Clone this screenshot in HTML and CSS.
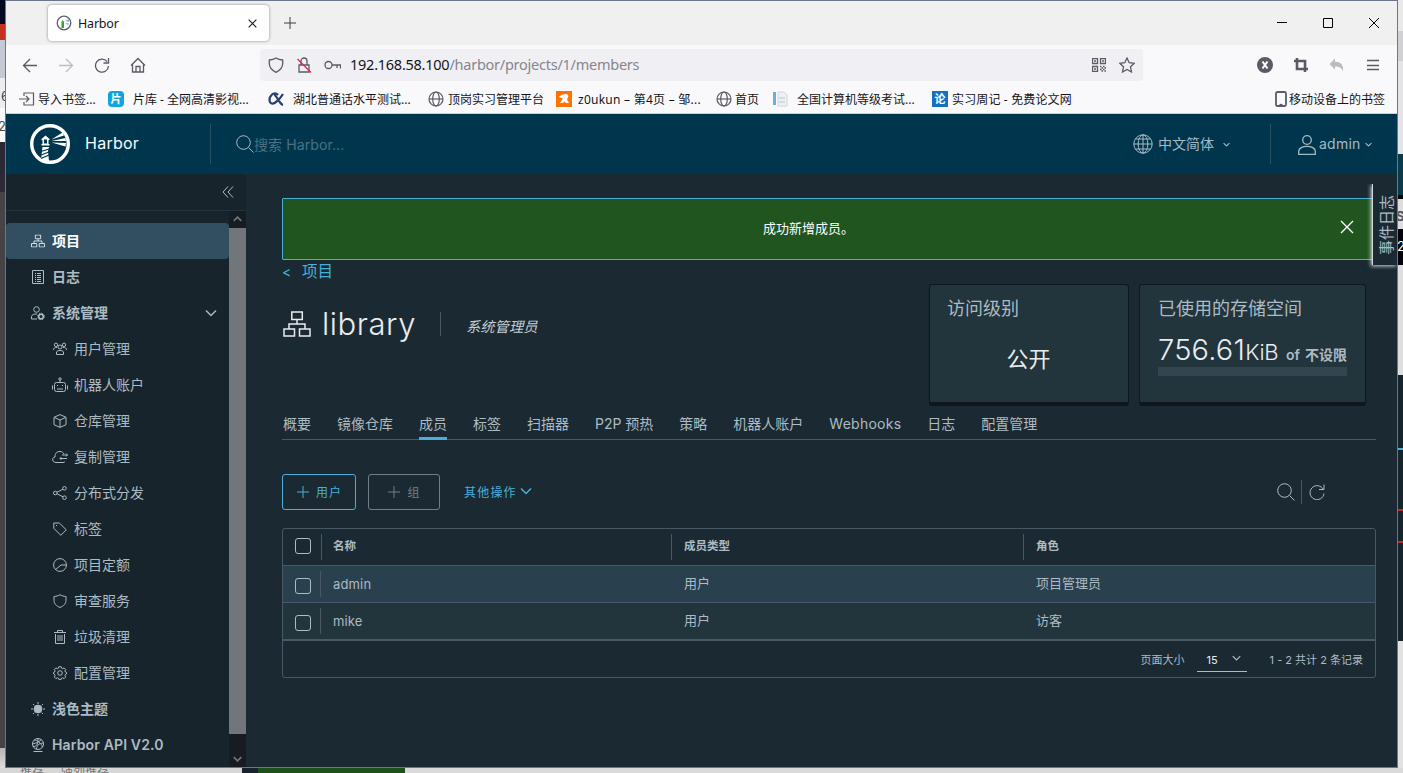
FILE: index.html
```html
<!DOCTYPE html>
<html lang="zh-CN">
<head>
    <meta charset="UTF-8">
    <meta name="viewport" content="width=device-width, initial-scale=1.0">
    <title>Harbor</title>
    <link rel="stylesheet" href="styles.css">
</head>
<body>

    <!-- Shared icons -->
    <svg class="sprite" aria-hidden="true">
        <symbol id="i-org" viewBox="0 0 28 26"><path d="M8.800 1h10.500v7.500H8.800zM1 18h10.500v7H1zM16.500 18H27v7H16.500zM14 8.500V13M6 18v-5h16v5"/></symbol>
        <symbol id="i-globe" viewBox="0 0 16 16"><circle cx="8" cy="8" r="7"/><ellipse cx="8" cy="8" rx="3.300" ry="7"/><path d="M1 8h14"/></symbol>
        <symbol id="i-chevron" viewBox="0 0 12 8"><path d="M1 1.500l5 5 5-5"/></symbol>
        <symbol id="i-search" viewBox="0 0 18 18"><circle cx="7.500" cy="7.500" r="6.800"/><path d="M12.500 12.500l5 5"/></symbol>
        <symbol id="i-gear" viewBox="0 0 14 14"><circle cx="7" cy="7" r="2.300"/><path d="M5.800.700h2.400l.4 1.600 1 .4 1.500-.8 1.600 1.700-.8 1.400.4 1 1.200.4v1.600l-1.200.5-.4 1 .8 1.400-1.600 1.700-1.500-.8-1 .4-.4 1.200H5.800l-.4-1.200-1-.4-1.500.8-1.600-1.700.8-1.400-.4-1-1.100-.5V6.400l1.100-.4.4-1-.8-1.400 1.600-1.700 1.500.8 1-.4z"/></symbol>
        <symbol id="i-close" viewBox="0 0 14 14"><path d="M1 1l12 12M13 1L1 13"/></symbol>
        <symbol id="i-plus" viewBox="0 0 12 12"><path d="M6 0v12M0 6h12"/></symbol>
    </svg>

    <div class="desktop">
        <div class="edge edge-left"><span class="peek-six">6</span><span class="peek-two">2</span></div>

        <div class="window">
            <!-- Browser tabs -->
            <div class="tab-strip">
                <div class="browser-tab">
                    <svg class="tab-favicon" viewBox="0 0 16 16"><circle cx="8" cy="8" r="6.800" fill="#fff" stroke="#5a6268" stroke-width="1.300"/><path d="M5.500 13V7l1-2L8 7v6z" fill="#3f9b35" stroke="none"/><path d="M9 6l4-2v3zM9 7.500l4 1-1 2z" fill="#86b5d8" stroke="none"/></svg>
                    <span>Harbor</span>
                    <svg class="tab-close" viewBox="0 0 14 14"><use href="#i-close"/></svg>
                </div>
                <svg class="new-tab" viewBox="0 0 12 12"><use href="#i-plus"/></svg>
                <div class="window-buttons">
                    <svg viewBox="0 0 10 10"><path d="M0 4.500h10"/></svg>
                    <svg viewBox="0 0 10 10"><path d="M.500.500h9v9h-9z"/></svg>
                    <svg viewBox="0 0 10 10"><path d="M0 0l10 10M10 0L0 10"/></svg>
                </div>
            </div>

            <!-- Navigation toolbar -->
            <div class="toolbar">
                <div class="nav-icons">
                    <svg viewBox="0 0 16 16"><path d="M15 8.500H1.500M8 2L1.500 8.500 8 15"/></svg>
                    <svg class="faded" viewBox="0 0 16 16"><path d="M1 8.500h13.500M8 2l6.500 6.500L8 15"/></svg>
                    <svg viewBox="0 0 16 16"><path d="M14.500 9A6.500 6.500 0 1 1 13 4.500M14.500 1v5h-5"/></svg>
                    <svg viewBox="0 0 16 16"><path d="M1 8.500L8 1.500l7 7M2.500 7.500V15h11V7.500M6 15V9.500h4V15"/></svg>
                </div>
                <div class="url-bar">
                    <svg viewBox="0 0 16 16"><path d="M8 1c2 1.300 4 1.800 6.700 2v3.500c0 4-3 7-6.700 8.800C4.300 13.500 1.300 10.500 1.300 6.500V3C4 2.800 6 2.300 8 1z"/></svg>
                    <svg viewBox="0 0 16 16"><path d="M3 8h10v7H3zM5 8V4a3 3 0 0 1 6 0v4"/><path class="slash" d="M1.500 2l13.500 13.500"/></svg>
                    <svg class="key" viewBox="0 0 17 16"><circle cx="4.500" cy="8" r="3.500"/><path d="M8 8h8.500v3.500M13 8v3"/></svg>
                    <div class="url"><b>192.168.58.100</b>/harbor/projects/1/members</div>
                    <svg class="qr" viewBox="0 0 14 14"><path d="M.500.500h5v5h-5zM8.500.500h5v5h-5zM.500 8.500h5v5h-5z"/><path class="bits" d="M2 3h2M10 3h2M2 11h2M8 8.500h1.500M11 8.500h1.500M9.500 10h1.500M12.500 10H14M8 11.500h1.500M11 11.500h1.500M9.500 13h1.500M12.500 13H14"/></svg>
                    <svg viewBox="0 0 16 16"><path d="M8 1l2.200 4.700 5 .6-3.700 3.500 1 5.200L8 12.400 3.500 15l1-5.200L.800 6.300l5-.6z"/></svg>
                </div>
                <div class="tool-icons">
                    <svg viewBox="0 0 16 16"><circle cx="8" cy="8" r="8" fill="#5b5b66" stroke="none"/><path d="M5.500 4.500l5 7M10.500 4.500l-5 7" stroke="#fff" stroke-width="2"/></svg>
                    <svg viewBox="0 0 16 16"><path d="M4 1v11h11M1 4h11v11" stroke-width="2.600"/></svg>
                    <svg viewBox="0 0 16 16"><path d="M6 1.500v3.300c5.500 0 9 3 8 9.700-1-3.200-3.500-5-8-5v3.300L.500 7z" fill="#bcbcbf" stroke="none"/></svg>
                    <svg viewBox="0 0 16 16"><path d="M2 3.500h12M2 8.500h12M2 12.500h12"/></svg>
                </div>
            </div>

            <!-- Bookmarks -->
            <div class="bookmarks">
                <div class="bookmark w-import"><svg viewBox="0 0 16 16"><path d="M5 5V2h9.500v12H5v-3M0 8h10M7 5l3 3-3 3"/></svg>导入书签...</div>
                <div class="bookmark site"><i class="fav fav-blue">片</i>片库 - 全网高清影视...</div>
                <div class="bookmark site"><svg viewBox="0 0 16 16"><path d="M10 4C6-1 0 6 2 11c2 4 8 0 13-8M6 4c3 0 5 9 9 10" stroke="#26406f" stroke-width="2.200"/></svg>湖北普通话水平测试...</div>
                <div class="bookmark w-intern"><svg viewBox="0 0 16 16"><use href="#i-globe"/></svg>顶岗实习管理平台</div>
                <div class="bookmark w-zoukun"><svg viewBox="0 0 16 16"><path d="M0 0h16v16H0z" fill="#ff7300" stroke="none"/><path d="M2.500 6l4-2.500 4.500-.5 1.500 2-1.500 3.500 2 3.500H9.500L9 10.500 6.500 12H4l3-4.500z" fill="#fff" stroke="none"/></svg><span>z0ukun – 第4页 – 邹...</span></div>
                <div class="bookmark w-home"><svg viewBox="0 0 16 16"><use href="#i-globe"/></svg>首页</div>
                <div class="bookmark site"><svg viewBox="0 0 16 16"><path d="M1 1h3v13H1z" fill="#70aed8" stroke="none"/><path d="M6 1h6l3 3v11H6z" fill="#eef1f4" stroke="#cfd5da" stroke-width="1"/><path d="M7 7h6M7 11h6" stroke="#c0c6cc"/></svg>全国计算机等级考试...</div>
                <div class="bookmark"><i class="fav fav-paper">论</i><span>实习周记 - 免费论文网</span></div>
                <div class="bookmark mobile"><svg viewBox="0 0 12 16"><rect x="1" y="1" width="10" height="14" rx="1.500" stroke-width="1.800"/><path d="M4.500 13.500h3"/></svg>移动设备上的书签</div>
            </div>

            <!-- Harbor header -->
            <header class="header">
                <svg class="logo" viewBox="0 0 40 40">
                    <circle cx="20" cy="20" r="18.300" fill="none" stroke="#fff" stroke-width="3.400"/>
                    <path d="M11.500 15l4-3.500 4 3.500v1h-1v4h1v1.500h-8V20h1v-4h-1zM12.500 23h6.500l-1 4 1 10-3.500 1-4.500-2.500z" fill="#fff"/>
                    <path d="M14 15.500h3v4h-3z" fill="#00364d"/>
                    <path d="M11 27.500l8-2.500M11 31l8-3M11 34.500l8-3.500" stroke="#00364d" stroke-width="1.300"/>
                    <path d="M21.500 15.500l11-7 1.500 3zM21.500 17l14-3 .500 3zM21.500 18.500l14.500.500-.5 3.500z" fill="#fff"/>
                </svg>
                <span class="brand">Harbor</span>
                <div class="search">
                    <svg viewBox="0 0 18 18"><use href="#i-search"/></svg>
                    <span>搜索 Harbor...</span>
                </div>
                <div class="language">
                    <svg class="big-globe" viewBox="0 0 20 20"><circle cx="10" cy="10" r="9.200"/><ellipse cx="10" cy="10" rx="4.800" ry="9.200"/><path d="M10 1v18M1 10h18M2.500 5h15M2.500 15h15"/></svg>
                    <span>中文简体</span>
                    <svg class="caret" viewBox="0 0 12 8"><use href="#i-chevron"/></svg>
                </div>
                <div class="account">
                    <svg class="person" viewBox="0 0 18 20"><circle cx="9" cy="5" r="4.300"/><path d="M.700 19.300v-3c0-3 4-5 8.300-5s8.300 2 8.300 5v3z"/></svg>
                    <span>admin</span>
                    <svg class="caret" viewBox="0 0 12 8"><use href="#i-chevron"/></svg>
                </div>
            </header>

            <div class="content">
                <!-- Sidebar -->
                <aside class="sidebar">
                    <div class="collapse"><svg viewBox="0 0 12 12"><path d="M6 .500L1 6l5 5.500M11 .500L6 6l5 5.500"/></svg></div>
                    <div class="sidebar-scroll">
                        <nav class="menu">
                            <a class="item active"><svg viewBox="0 0 28 26"><use href="#i-org" stroke-width="2"/></svg>项目</a>
                            <a class="item"><svg viewBox="0 0 14 14"><path d="M1.500.500h11v13h-11zM4 3.500h1M6 3.500h4M4 5.500h1M6 5.500h4M4 7.500h1M6 7.500h4M4 9.500h1M6 9.500h4M4 11.500h1M6 11.500h4"/></svg>日志</a>
                            <a class="item"><svg viewBox="0 0 14 14"><circle cx="5.500" cy="3.500" r="2.800"/><path d="M6 13H.500v-2.500C1 8.500 3 7.800 6 8"/><circle cx="10" cy="10.500" r="2.300" stroke-width="1.600"/><circle cx="10" cy="10.500" r="3.300" stroke-dasharray="1.400 1.200"/></svg>系统管理<svg class="expand" viewBox="0 0 12 8"><use href="#i-chevron"/></svg></a>
                            <a class="item sub"><svg viewBox="0 0 14 14"><circle cx="7" cy="5" r="2"/><circle cx="3" cy="2.800" r="1.700"/><circle cx="11" cy="2.800" r="1.700"/><path d="M3.500 12.500V10c.500-2 6.500-2 7 0v2.500zM.500 8c0-2 1.500-2.800 3.500-2.500M13.500 8c0-2-1.500-2.800-3.500-2.500"/></svg>用户管理</a>
                            <a class="item sub wide"><svg viewBox="0 0 16 16"><rect x="2.500" y="5.500" width="11" height="9" rx="2"/><circle cx="8" cy="2" r="1.200"/><path d="M8 3v2.500M.500 8.500v4M15.500 8.500v4M5 12h6M5 8.500h1M10 8.500h1"/></svg>机器人账户</a>
                            <a class="item sub"><svg viewBox="0 0 14 14"><path d="M7 .600l6 2.700v7.400l-6 2.700-6-2.700V3.300zM1 3.300L7 6l6-2.700M7 6v7.400"/></svg>仓库管理</a>
                            <a class="item sub wide"><svg viewBox="0 0 16 14"><path d="M13 11.500c-.5.700-1 1-2 1H4c-4 0-4.500-5-1-5.500C3 3 5 1.500 8 1.500c2 0 3 1 4 2.500M10 5h5.500M14 3.500L15.500 5 14 6.500M15 8.500H8M9.500 7L8 8.500 9.500 10"/></svg>复制管理</a>
                            <a class="item sub"><svg viewBox="0 0 14 14"><circle cx="2.300" cy="7" r="1.800"/><circle cx="11.500" cy="2.300" r="1.800"/><circle cx="11.500" cy="11.700" r="1.800"/><path d="M4 6.200l6-3M4 7.800l6 3"/></svg>分布式分发</a>
                            <a class="item sub"><svg viewBox="0 0 14 14"><path d="M.800 1h5.500l7 6.800-5.500 5.500-7-7zM3 3.500h1"/></svg>标签</a>
                            <a class="item sub"><svg viewBox="0 0 14 14"><circle cx="7" cy="7" r="6.400"/><path d="M2.500 11.500L8 7h5.500"/></svg>项目定额</a>
                            <a class="item sub"><svg viewBox="0 0 14 14"><path d="M7 .700c2 1.300 4 1.600 6 1.800v4c0 3.300-2.500 5.500-6 7-3.500-1.500-6-3.700-6-7v-4C3 2.300 5 2 7 .700z"/></svg>审查服务</a>
                            <a class="item sub"><svg viewBox="0 0 14 14"><path d="M1 2.500h12M4.500 2.500v-2h5v2M2.500 4v9.500h9V4M5 5v6M7 5v6M9 5v6"/></svg>垃圾清理</a>
                            <a class="item sub"><svg viewBox="0 0 14 14"><use href="#i-gear"/></svg>配置管理</a>
                            <a class="item"><svg viewBox="0 0 14 14"><circle cx="7" cy="7" r="3.900" fill="#adbbc4"/><path d="M7 0v2M7 12v2M0 7h2M12 7h2M2 2l1.300 1.300M10.700 10.700L12 12M12 2l-1.300 1.300M3.300 10.700L2 12"/></svg>浅色主题</a>
                            <a class="item api"><svg viewBox="0 0 14 14"><circle cx="7" cy="6" r="5.500"/><path d="M3 2c3 0 7 3 8.500 7M1.500 6C5 5 9 4 10 1.500M5.500 11c0-3 2-6 7-6M2 8.500c3 0 5-1 5-8M2.500 13.500h9"/></svg>Harbor API V2.0</a>
                        </nav>
                        <div class="scrollbar">
                            <svg class="up" viewBox="0 0 12 8"><use href="#i-chevron"/></svg>
                            <div class="thumb"></div>
                            <svg viewBox="0 0 12 8"><use href="#i-chevron"/></svg>
                        </div>
                    </div>
                </aside>

                <!-- Project page -->
                <main class="page">
                    <div class="alert">
                        <span>成功新增成员。</span>
                        <svg viewBox="0 0 14 14"><use href="#i-close"/></svg>
                    </div>
                    <div class="back"><span class="lt">&lt;</span>项目</div>

                    <div class="summary">
                        <div class="title">
                            <svg viewBox="0 0 28 26"><use href="#i-org"/></svg>
                            <h1>library</h1>
                            <span class="role">系统管理员</span>
                        </div>
                        <div class="card access">
                            <h2>访问级别</h2>
                            <p>公开</p>
                        </div>
                        <div class="card storage">
                            <h2>已使用的存储空间</h2>
                            <div class="quota"><span class="num">756.61</span><span class="unit">KiB</span><span class="of">of</span><span class="limit">不设限</span></div>
                            <div class="bar"></div>
                        </div>
                    </div>

                    <div class="tabs">
                        <a>概要</a><a>镜像仓库</a><a class="current">成员</a><a>标签</a><a>扫描器</a><a>P2P 预热</a><a>策略</a><a>机器人账户</a><a class="webhooks">Webhooks</a><a>日志</a><a>配置管理</a>
                    </div>

                    <div class="actions">
                        <button class="btn btn-user"><svg viewBox="0 0 12 12"><use href="#i-plus"/></svg>用户</button>
                        <button class="btn btn-group"><svg viewBox="0 0 12 12"><use href="#i-plus"/></svg>组</button>
                        <span class="more">其他操作<svg viewBox="0 0 12 8"><use href="#i-chevron"/></svg></span>
                        <div class="list-tools">
                            <svg class="find" viewBox="0 0 18 18"><use href="#i-search"/></svg>
                            <svg class="refresh" viewBox="0 0 16 16"><path d="M15 9.500A7 7 0 1 1 14.300 5.500M15 .500v5h-5"/></svg>
                        </div>
                    </div>

                    <div class="grid">
                        <div class="row head"><div class="check"><i></i></div><div class="cell name">名称</div><div class="cell type">成员类型</div><div class="cell">角色</div></div>
                        <div class="row hovered"><div class="check"><i></i></div><div class="cell name latin">admin</div><div class="cell type">用户</div><div class="cell">项目管理员</div></div>
                        <div class="row striped"><div class="check"><i></i></div><div class="cell name latin">mike</div><div class="cell type">用户</div><div class="cell">访客</div></div>
                        <div class="grid-foot">
                            <span>页面大小</span>
                            <div class="page-size">15<svg viewBox="0 0 12 8"><use href="#i-chevron"/></svg></div>
                            <span class="count">1 - 2 共计 2 条记录</span>
                        </div>
                    </div>
                </main>
                <div class="event-log"><span>事件日志</span></div>
            </div>
        </div>

        <div class="edge edge-right"><span class="peek-s">S</span><span class="peek-num">2</span></div>
    </div>
    <div class="below"><span>推荐</span><span>强列推荐</span></div>

</body>
</html>
```

FILE: styles.css
```css
* {
    box-sizing: border-box;
}

body {
    margin: 0;
    width: 1403px;
    height: 773px;
    overflow: hidden;
    background: #e3e3e3;
    font-family: Inter, "Noto Sans CJK SC", sans-serif;
    font-size: 14px;
    color: #adbbc4;
}

svg {
    display: block;
    flex: none;
    fill: none;
    stroke: currentColor;
}

.sprite {
    display: none;
}

/* --- Desktop behind the window --- */
.desktop {
    display: flex;
    height: 768px;
}

.edge {
    width: 5px;
    flex: none;
    overflow: hidden;
    position: relative;
    font-size: 13px;
}

.edge span {
    position: absolute;
}

.edge-left {
    background: linear-gradient(#030a20 0 24px, #c43124 24px 40px, #c5c9d3 40px 78px, #ececf1 78px 108px, #f9f9f9 108px 142px, #2a2935 142px 192px, #454346 192px 748px, #b5b5b5 748px, #dcdcdc);
    color: #444;
}

.peek-six { left: 1px; top: 88px; }
.peek-two { left: -2px; top: 118px; }

.edge-right {
    background: linear-gradient(#e9e9e9 0 31px, #d0d0d5 31px 61px, #e4e4e6 61px 154px, #0b3a4a 154px 195px, #050507 195px 199px, #ddd 199px 229px, #04050c 229px 265px, #dedede 265px 375px, #18242c 375px 448px, #49afd9 448px 450px, #18242c 450px 509px, #c5292c 509px 511px, #18242c 511px 541px, #c5292c 541px 543px, #18242c 543px 641px, #e2e2e2 641px);
}

.peek-s { left: -2px; top: 208px; color: #555; font-weight: 700; }
.peek-num { left: -1px; top: 238px; color: #fff; }

.below {
    display: flex;
    height: 5px;
    overflow: hidden;
    gap: 17px;
    padding-left: 20px;
    background: linear-gradient(90deg, #d7d7d7 0 242px, #17242f 242px 258px, #1d501b 258px 405px, #dadada 405px);
    color: #777;
    font-size: 12px;
    line-height: 5px;
}

.window {
    width: 1393px;
    height: 768px;
    border: 1px solid #6d7689;
    background: #1b2a32;
    display: flex;
    flex-direction: column;
}

/* --- Browser chrome --- */
.tab-strip {
    height: 44px;
    background: #f0f0f0;
    display: flex;
    align-items: center;
    padding-left: 42px;
    color: #15141a;
}

.browser-tab {
    display: flex;
    align-items: center;
    width: 221px;
    height: 36px;
    padding: 0 12px 0 8px;
    border-radius: 4px;
    background: #fff;
    box-shadow: 0 0 3px rgba(0, 0, 0, 0.45);
    font: 12.5px "Noto Sans", sans-serif;
    letter-spacing: -0.2px;
}

.tab-favicon {
    width: 16px;
    height: 16px;
    margin-right: 6px;
}

.tab-close {
    width: 9px;
    height: 9px;
    margin-left: auto;
    stroke-width: 1.6;
}

.new-tab {
    width: 12px;
    height: 12px;
    margin-left: 15px;
    color: #3c3b44;
}

.window-buttons {
    display: flex;
    gap: 36px;
    margin-left: auto;
    padding-right: 18px;
    color: #000;
}

.window-buttons svg {
    width: 10px;
    height: 10px;
}

.toolbar {
    display: flex;
    align-items: center;
    height: 42px;
    padding-bottom: 2px;
    background: #f9f9fb;
    color: #5b5b66;
}

.toolbar svg {
    width: 16px;
    height: 16px;
    stroke-width: 1.3;
}

.nav-icons {
    display: flex;
    gap: 20px;
    width: 254px;
    padding-left: 16px;
}

.nav-icons .faded {
    color: #bcbcc2;
}

.url-bar {
    display: flex;
    align-items: center;
    gap: 12px;
    width: 883px;
    height: 32px;
    padding: 0 8px;
    border-radius: 4px;
    background: #f0f0f4;
}

.url-bar .slash {
    stroke: #e22850;
}

.url-bar .key {
    width: 17px;
}

.url {
    flex: 1;
    margin: -2px 0 0 -3px;
    font: 14.5px "Noto Sans", sans-serif;
    letter-spacing: -0.25px;
    color: #86858c;
}

.url b {
    font-weight: 400;
    color: #15141a;
}

.url-bar .qr {
    width: 14px;
    height: 14px;
    margin-right: 1px;
}

.qr .bits {
    stroke-width: 1.6;
}

.tool-icons {
    display: flex;
    gap: 20px;
    margin-left: auto;
    padding-right: 16px;
}

.bookmarks {
    display: flex;
    align-items: center;
    height: 27px;
    padding: 0 12px 2px 13px;
    border-bottom: 1px solid #cfcfd6;
    background: #f9f9fb;
    color: #15141a;
    font: 12px "Noto Sans", "Noto Sans CJK SC", sans-serif;
    white-space: nowrap;
}

.bookmark {
    display: flex;
    align-items: center;
    gap: 4px;
}

.bookmark svg {
    width: 16px;
    height: 16px;
    stroke-width: 1.2;
    color: #5b5b66;
}

.fav {
    width: 16px;
    height: 16px;
    font-size: 11px;
    font-style: normal;
    font-weight: 700;
    line-height: 15px;
    text-align: center;
    color: #fff;
}

.fav-blue {
    border-radius: 4px;
    background: #0ea5df;
}

.fav-paper {
    background: #1372c4;
}

.fav-paper + span {
    letter-spacing: 0.15px;
}

.site {
    width: 160px;
    gap: 9px;
}

.w-import { width: 89px; gap: 3px; }
.w-intern { width: 128px; }
.w-zoukun { width: 160px; gap: 6px; letter-spacing: 0.25px; }
.w-home { width: 56px; gap: 3px; }

.mobile {
    margin-left: auto;
    gap: 2px;
}

.mobile svg {
    width: 12px;
}

/* --- Harbor header --- */
.header {
    display: flex;
    align-items: center;
    height: 60px;
    background: #00364d;
}

.logo {
    width: 40px;
    height: 40px;
    margin-left: 24px;
    stroke: none;
}

.brand {
    width: 126px;
    padding-left: 15px;
    margin-top: -2px;
    font-size: 16px;
    letter-spacing: 0.25px;
    color: #fafafa;
}

.search {
    display: flex;
    align-items: center;
    height: 40px;
    margin-left: 14px;
    padding-left: 25px;
    border-left: 1px solid #26505f;
    color: #4c7081;
    letter-spacing: 0.1px;
}

.search svg {
    width: 18px;
    height: 18px;
    color: #a6b9c3;
}

.language {
    display: flex;
    align-items: center;
    height: 40px;
    width: 138px;
    margin-left: auto;
    border-right: 1px solid #26505f;
    color: #a6b9c3;
}

.language span {
    margin-top: -2px;
}

.big-globe {
    width: 20px;
    height: 20px;
    margin-right: 5px;
}

.header .caret {
    width: 7px;
    height: 5px;
    margin-left: 9px;
    stroke-width: 1.8;
}

.account {
    display: flex;
    align-items: center;
    width: 126px;
    padding-left: 27px;
    color: #a6b9c3;
}

.account span {
    margin-top: -2px;
    letter-spacing: 0.25px;
}

.person {
    width: 18px;
    height: 20px;
    margin: 2px 3px 0 0;
    stroke-width: 1.3;
}

.account .caret {
    margin-left: 4px;
}

/* --- Sidebar --- */
.content {
    position: relative;
    display: flex;
    height: 593px;
}

.sidebar {
    width: 240px;
    background: #17242b;
}

.collapse {
    height: 37px;
    padding: 12px 12px 0 0;
    border-bottom: 1px solid #22333b;
}

.collapse svg {
    width: 12px;
    height: 12px;
    margin-left: auto;
}

.sidebar-scroll {
    display: flex;
    height: 556px;
}

.menu {
    width: 223px;
    padding-top: 12px;
}

.item {
    display: flex;
    align-items: center;
    height: 36px;
    padding: 0 0 2px 25px;
    font-weight: 600;
}

.item svg {
    width: 14px;
    height: 14px;
    margin: 2px 7px 0 0;
}

.item.active {
    border-radius: 4px;
    background: #324f62;
    color: #fff;
}

.item.active svg {
    color: #d5dde1;
}

.item.sub {
    padding-left: 47px;
    font-weight: 400;
}

.item.wide {
    padding-left: 46px;
}

.item.wide svg {
    width: 16px;
    height: 16px;
    margin-right: 6px;
}

.item.api {
    letter-spacing: 0.15px;
}

.item .expand {
    width: 12px;
    height: 8px;
    margin: 1px 12px 0 auto;
    stroke-width: 1.4;
}

.scrollbar {
    width: 17px;
    background: #161c22;
    color: #717679;
}

.scrollbar svg {
    width: 9px;
    height: 6px;
    margin: 22px auto 0;
    stroke-width: 2.2;
}

.scrollbar .up {
    margin: 5px auto 6px;
    transform: rotate(180deg);
}

.thumb {
    height: 506px;
    background: #71767a;
}

/* --- Page --- */
.page {
    flex: 1;
    padding: 24px 21px 0 36px;
}

.alert {
    display: flex;
    align-items: center;
    height: 62px;
    padding-right: 21px;
    border: 1px solid #49afd9;
    border-radius: 1px;
    background: #205520;
    color: #fff;
    font-size: 13px;
}

.alert span {
    margin: -3px 0 0 480px;
}

.alert svg {
    width: 14px;
    height: 14px;
    margin: -4px 0 0 auto;
    stroke-width: 1.4;
}

.back {
    height: 24px;
    color: #49afd9;
    font-size: 15.5px;
    line-height: 24px;
}

.lt {
    display: inline-block;
    width: 20px;
    font-size: 14px;
}

.summary {
    display: flex;
    height: 122px;
    padding-right: 10px;
}

.title {
    display: flex;
    align-items: center;
    height: 80px;
    flex: 1;
    color: #e9ecef;
}

.title svg {
    width: 28px;
    height: 26px;
    margin: 0 11px 0 1px;
    stroke-width: 1.5;
}

.title h1 {
    margin: 0 24px 0 0;
    font-size: 31px;
    font-weight: 300;
    letter-spacing: 0.55px;
    line-height: 36px;
}

.role {
    height: 24px;
    padding: 3px 0 0 25px;
    border-left: 1px solid #495865;
    color: #c5ced3;
    font-size: 14.3px;
    font-style: italic;
    line-height: 24px;
}

.card {
    height: 122px;
    padding: 11px 18px 0;
    border: 1px solid #0f171c;
    border-bottom-width: 4px;
    border-radius: 3px;
    background: #22343c;
}

.card h2 {
    margin: 0;
    font-size: 18px;
    font-weight: 400;
    line-height: 25px;
}

.access {
    width: 200px;
    padding-left: 17px;
    margin-right: 10px;
}

.access p {
    margin: 23px 0 0;
    font-size: 22px;
    line-height: 30px;
    text-align: center;
    color: #e9ecef;
}

.storage {
    width: 227px;
}

.quota {
    display: flex;
    align-items: baseline;
    height: 46px;
    color: #e9ecef;
    line-height: 57px;
    white-space: nowrap;
}

.num {
    font-size: 29px;
    font-weight: 300;
    letter-spacing: 0.2px;
}

.unit {
    width: 34px;
    font-size: 22px;
    font-weight: 300;
    letter-spacing: -0.3px;
}

.of {
    margin: 0 5px 0 auto;
    font-weight: 600;
    color: #adbbc4;
}

.limit {
    font-weight: 700;
    color: #adbbc4;
}

.bar {
    height: 9px;
    background: #324650;
}

.tabs {
    display: flex;
    gap: 26px;
    height: 34px;
    padding-left: 1px;
    border-bottom: 1px solid #495865;
    line-height: 36px;
    white-space: nowrap;
}

.tabs .current {
    height: 34px;
    border-bottom: 3px solid #49afd9;
}

.tabs .webhooks {
    letter-spacing: 0.25px;
}

.actions {
    display: flex;
    align-items: center;
    padding-top: 34px;
    font-size: 12px;
    letter-spacing: 1px;
}

.btn {
    display: flex;
    align-items: center;
    justify-content: center;
    gap: 7px;
    height: 36px;
    margin-right: 12px;
    padding: 0 0 1px 1px;
    border: 1px solid #49afd9;
    border-radius: 3px;
    background: transparent;
    color: #49afd9;
    font: inherit;
    letter-spacing: inherit;
}

.btn svg {
    width: 12px;
    height: 12px;
}

.btn-user {
    width: 74px;
}

.btn-group {
    width: 72px;
    border-color: #717e85;
    color: #717e85;
}

.more {
    display: flex;
    align-items: center;
    gap: 3px;
    padding: 0 0 2px 12px;
    color: #49afd9;
    letter-spacing: 1.2px;
}

.more svg {
    width: 12px;
    height: 8px;
    stroke-width: 1.5;
}

.list-tools {
    display: flex;
    align-items: center;
    margin: 0 51px 0 auto;
}

.find {
    width: 18px;
    height: 18px;
}

.refresh {
    width: 24px;
    height: 24px;
    margin-left: 6px;
    padding: 4px 0 4px 7px;
    border-left: 1px solid #495865;
}

/* --- Members grid --- */
.grid {
    height: 150px;
    margin-top: 18px;
    border: 1px solid #495865;
    border-radius: 3px;
    font-size: 13px;
}

.row {
    display: flex;
    align-items: center;
    height: 37px;
    border-bottom: 1px solid #495865;
}

.row.head {
    font-size: 11.5px;
    font-weight: 600;
}

.row.hovered {
    background: #29404e;
}

.row.striped {
    height: 38px;
    border-bottom-width: 2px;
    background: #22343c;
}

.check {
    width: 38px;
    height: 26px;
    padding: 7px 0 0 12px;
    border-right: 1px solid #495865;
}

.check i {
    display: block;
    width: 16px;
    height: 16px;
    border: 1px solid #adbbc4;
    border-radius: 3px;
}

.head .check {
    width: 39px;
    padding-top: 4px;
}

.cell {
    height: 26px;
    padding-left: 12px;
    line-height: 25px;
}

.cell.name {
    width: 351px;
}

.cell.latin {
    line-height: 26px;
    letter-spacing: 0.15px;
}

.head .name {
    width: 350px;
    padding-left: 11px;
}

.cell.type {
    width: 352px;
}

.head .name,
.head .type {
    border-right: 1px solid #495865;
}

.grid-foot {
    display: flex;
    align-items: center;
    justify-content: flex-end;
    height: 36px;
    padding: 0 12px 1px 0;
    font-size: 11px;
}

.page-size {
    display: flex;
    align-items: center;
    justify-content: space-between;
    width: 50px;
    height: 24px;
    margin: 3px 23px 0 12px;
    padding: 0 6px 0 10px;
    border-bottom: 1px solid #adbbc4;
    color: #e9ecef;
}

.page-size svg {
    width: 9px;
    height: 6px;
    margin-top: -4px;
    stroke-width: 1.7;
    color: #adbbc4;
}

/* --- Event log drawer handle --- */
.event-log {
    position: absolute;
    top: 10px;
    right: 0;
    width: 25px;
    height: 81px;
    padding: 2px 0 0;
    border-left: 1px solid #d5dadd;
    background: #1b2a32;
    box-shadow: -1px 1px 4px #d5dadd;
    clip-path: inset(0 0 -5px -5px);
    display: flex;
    align-items: center;
    justify-content: center;
    font-size: 15px;
}

.event-log span {
    writing-mode: vertical-rl;
    text-orientation: sideways;
    transform: rotate(180deg);
}
```
